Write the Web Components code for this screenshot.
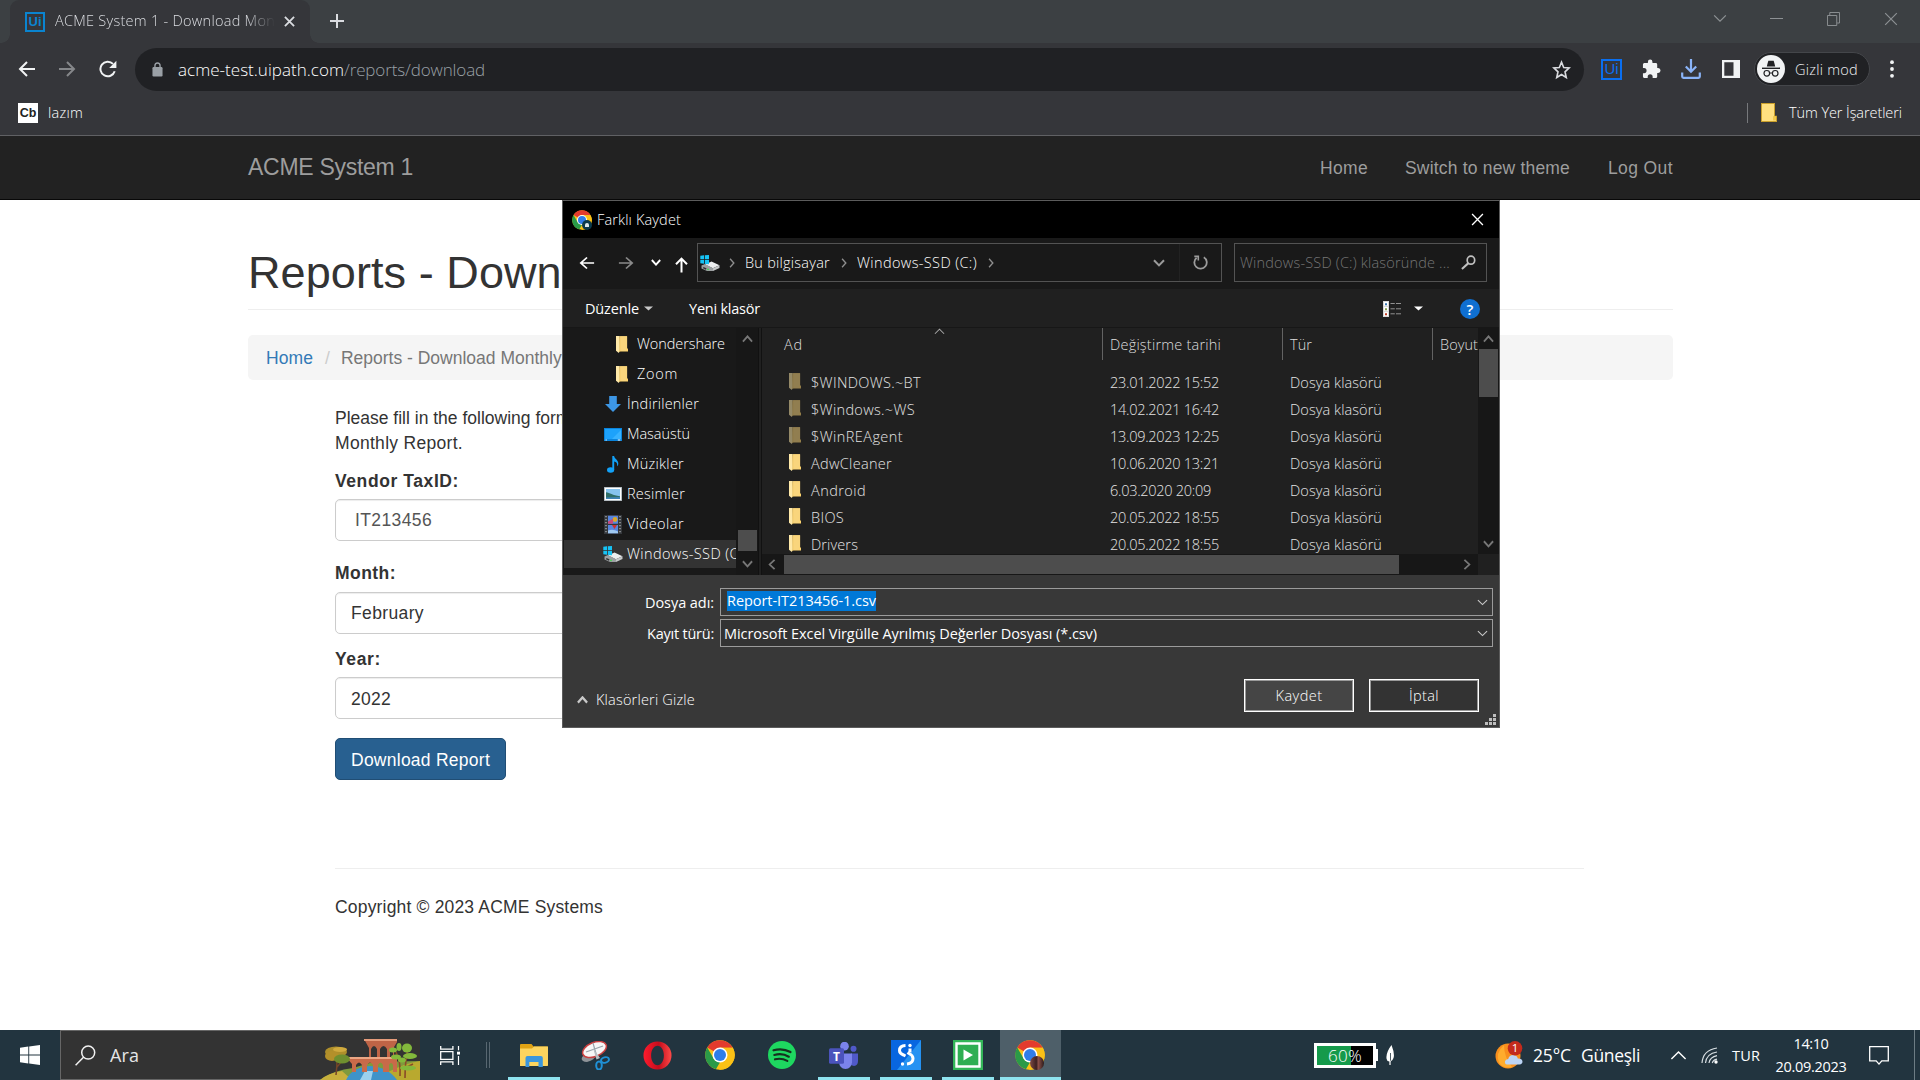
<!DOCTYPE html>
<html lang="tr">
<head>
<meta charset="utf-8">
<title>ACME System 1 - Download Monthly Report</title>
<style>
html,body{margin:0;padding:0;background:#fff}
body{width:1920px;height:1080px;overflow:hidden;position:relative;display:flex;flex-direction:column;font-family:"Open Sans","Noto Sans",sans-serif}
save-dialog{position:absolute;left:562px;top:200px}
</style>
</head>
<body>
<tab-strip></tab-strip>
<nav-toolbar></nav-toolbar>
<bookmark-bar></bookmark-bar>
<acme-navbar></acme-navbar>
<acme-page></acme-page>
<task-bar></task-bar>
<save-dialog></save-dialog>
<script>
const ICONS = {
chrome:`<svg viewBox="0 0 48 48"><circle cx="24" cy="24" r="23.500" fill="#fbc116"/><path d="M24 .5a23.500 23.500 0 0 1 20.500 12H24L14 18 3.600 12A23.500 23.500 0 0 1 24 .5z" fill="#e33b2e"/><path d="M3.600 12 14 30l10 5.500-6.500 11.200L22.600 47.500A23.500 23.500 0 0 1 3.600 12z" fill="#2a9a48"/><path d="M44.500 12.500A23.500 23.500 0 0 1 22.600 47.500L34 29.700 34 18.300 24 12.500z" fill="#fbc116"/><circle cx="24" cy="24" r="12" fill="#fff"/><circle cx="24" cy="24" r="9.600" fill="#2f7de9"/></svg>`,
x:`<svg viewBox="0 0 12 12"><path d="M1 1 11 11M11 1 1 11" stroke="currentColor" stroke-width="var(--sw,1.2)" fill="none"/></svg>`,
down:`<svg viewBox="0 0 12 8"><path d="M1 1.2 6 6.4 11 1.2" stroke="currentColor" stroke-width="var(--sw,1.6)" fill="none"/></svg>`,
up:`<svg viewBox="0 0 12 8"><path d="M1 6.6 6 1.4 11 6.6" stroke="currentColor" stroke-width="var(--sw,1.6)" fill="none"/></svg>`,
right:`<svg viewBox="0 0 8 12"><path d="M1.4 1 6.4 6 1.4 11" stroke="currentColor" stroke-width="var(--sw,1.8)" fill="none"/></svg>`,
left:`<svg viewBox="0 0 8 12"><path d="M6.6 1 1.6 6 6.6 11" stroke="currentColor" stroke-width="var(--sw,1.8)" fill="none"/></svg>`,
tri:`<svg viewBox="0 0 10 6"><path d="M0 .5h10L5 5.5z" fill="currentColor"/></svg>`,
plus:`<svg viewBox="0 0 16 16"><path d="M8 1v14M1 8h14" stroke="currentColor" stroke-width="2"/></svg>`,
back:`<svg viewBox="0 0 18 18"><path d="M17 9H2.5M9 2 2 9l7 7" stroke="currentColor" stroke-width="2" fill="none"/></svg>`,
fwd:`<svg viewBox="0 0 18 18"><path d="M1 9h14.5M9 2l7 7-7 7" stroke="currentColor" stroke-width="2" fill="none"/></svg>`,
arrowup:`<svg viewBox="0 0 13 16"><path d="M6.5 15.500V2M1 7.300 6.500 1.600 12 7.300" stroke="currentColor" stroke-width="2" fill="none"/></svg>`,
reload:`<svg viewBox="0 0 18 18"><path d="M15.700 11.200A7.300 7.300 0 1 1 14 3.900" stroke="currentColor" stroke-width="2" fill="none"/><path d="M17.400.8v7.200h-7.200z" fill="currentColor"/></svg>`,
refresh:`<svg viewBox="0 0 15 15"><path d="M10.800 2.200A6.200 6.200 0 1 1 3.600 2.700" stroke="currentColor" stroke-width="1.800" fill="none"/><path d="M1.300 1.400h4v4.200" stroke="currentColor" stroke-width="1.600" fill="none"/></svg>`,
lock:`<svg viewBox="0 0 12 15"><rect x=".5" y="5" width="11" height="9.500" rx="1.200" fill="currentColor"/><path d="M3.200 6V3.800a2.800 2.800 0 0 1 5.600 0V6" stroke="currentColor" stroke-width="1.500" fill="none"/></svg>`,
star:`<svg viewBox="0 0 20 20"><path d="M10 2.200l2.300 5.300 5.700.5-4.300 3.800 1.300 5.700-5-3-5 3 1.300-5.700L2 8l5.700-.5z" stroke="currentColor" stroke-width="1.700" fill="none"/></svg>`,
puzzle:`<svg viewBox="0 0 20 20"><path d="M17 9h-1V5.500C16 4.600 15.400 4 14.500 4H11V3a2.400 2.400 0 0 0-4.800 0v1H2.700C1.800 4 1 4.700 1 5.600V9h1.200a2.600 2.600 0 0 1 0 5.200H1v3.300c0 .9.700 1.500 1.700 1.500H6v-1.200a2.600 2.600 0 0 1 5.200 0V19h3.300c.9 0 1.500-.6 1.500-1.500V14h1a2.500 2.500 0 0 0 0-5z" fill="currentColor"/></svg>`,
download:`<svg viewBox="0 0 20 20"><path d="M10 0v12M4.800 7.500 10 12.700l5.200-5.200" stroke="currentColor" stroke-width="2.200" fill="none"/><path d="M1.200 13.500v4c0 .8.500 1.300 1.300 1.300h15c.8 0 1.300-.5 1.300-1.300v-4" stroke="currentColor" stroke-width="2.200" fill="none"/></svg>`,
panel:`<svg viewBox="0 0 18 18"><path d="M0 0h18v18H0z M2.300 2.300v13.400h9.200V2.300z" fill-rule="evenodd" fill="currentColor"/></svg>`,
incognito:`<svg viewBox="0 0 28 28"><circle cx="14" cy="14" r="14" fill="#f1f3f4"/><path d="M9.800 11.500l1.500-5.700h5.400l1.500 5.700z" fill="#202124"/><path d="M5 13.300h18" stroke="#202124" stroke-width="1.400"/><circle cx="9.800" cy="18.300" r="2.800" fill="none" stroke="#202124" stroke-width="1.200"/><circle cx="18.200" cy="18.300" r="2.800" fill="none" stroke="#202124" stroke-width="1.200"/><path d="M12.500 18h3" stroke="#202124"/></svg>`,
dots:`<svg viewBox="0 0 4 18"><circle cx="2" cy="2.200" r="1.900" fill="currentColor"/><circle cx="2" cy="9" r="1.900" fill="currentColor"/><circle cx="2" cy="15.800" r="1.900" fill="currentColor"/></svg>`,
max:`<svg viewBox="0 0 14 14"><path d="M.5 3.500h10v10H.5zM3 3V.5h10.500V11H11" stroke="currentColor" fill="none"/></svg>`,
min:`<svg viewBox="0 0 13 3"><path d="M0 1.500h13" stroke="currentColor"/></svg>`,
bmfolder:`<svg viewBox="0 0 16 18"><path d="M.5.5h13v12h2v5H.5z" fill="#ffe080" stroke="#caa02c"/><path d="M12 12.500h3v4h-3z" fill="#f2c94a"/></svg>`,
folder:`<svg viewBox="0 0 13 17"><path d="M4 .3h8v12.200h1v3H3z" fill="#ffd56f"/><path d="M4.500.3H12v12h-1V15H4.500z" fill="#f9d57c"/><path d="M0 0h4l.3 14-1.200 3L0 14.700z" fill="#ffe9a8"/><path d="M4 1v15" stroke="#dfb551" stroke-width=".6"/></svg>`,
drive:`<svg viewBox="0 0 20 16"><path d="M5 9.500 11.500 6.500l8 3.700-6.700 3z" fill="#eceeef"/><path d="M1.500 10.500 5 9l8 4.200V16H7l-5.500-2.600z" fill="#9b9fa1"/><path d="m13 13.200 6.500-3V13L13 16z" fill="#c5c8c9"/><path d="M3.200 12.700l3 1.300" stroke="#333" stroke-width="1.400"/><circle cx="8" cy="14.400" r=".8" fill="#3d4"/><path d="M.3.800 4 .3v3.900H.3zM4.800.2 9 0v4.200H4.800zM.3 5H4v3.800L.3 8.300zM4.800 5H9v4.200l-4.200-.3z" fill="#16c3f5"/></svg>`,
dl:`<svg viewBox="0 0 16 16"><path d="M4.200 0h7.600v8H16l-8 8-8-8h4.200z" fill="#3d97e6"/></svg>`,
desk:`<svg viewBox="0 0 18 13"><path d="M0 0h18v13H0z" fill="#0a84dc"/><path d="M1 1h16v10H1z" fill="#1da2fb"/><path d="M8 11 17 2v9z" fill="#38b2ff"/><path d="M1.500 12h1.300m11 0h2.500" stroke="#fff"/></svg>`,
music:`<svg viewBox="0 0 12 17"><ellipse cx="3.600" cy="14" rx="3.600" ry="2.800" fill="#12a1f7"/><path d="M5.300 0h1.800c.3 3 4.600 3.900 4.200 8.200-.2 1-.8 1.700-1.300 2.100 .7-3-.8-4.400-2.800-4.700V14H5.300z" fill="#12a1f7"/></svg>`,
pics:`<svg viewBox="0 0 18 14"><path d="M0 0h18v14H0z" fill="#a7b0b6"/><path d="M.8.8h16.400v12.400H.800z" fill="#fff"/><path d="M2 2h14v10H2z" fill="#86c3ee"/><path d="M2 5.300c4 .4 6 3 14 4V12H2z" fill="#2f6e68"/><path d="M2 10.500l14-.6V12H2z" fill="#3f83b5"/></svg>`,
video:`<svg viewBox="0 0 18 19"><path d="M0 0h18v19H0z" fill="#34373b"/><path d="M4 .8h10v8H4zM4 10h10v8.300H4z" fill="#5785df"/><circle cx="11" cy="4.500" r="2.400" fill="#d9a72b"/><path d="M4 6.500 9 3.800v5H4z" fill="#c9487b"/><path d="M8 10h5l-2.500 4z" fill="#cf3030"/><path d="M4 15.500q5-2 10 1v1.800H4z" fill="#9fc8f0"/><path d="M2 1v17.500M16 1v17.500" stroke="#8b8f93" stroke-width="1.800" stroke-dasharray="1.300 1.700"/></svg>`,
search:`<svg viewBox="0 0 16 15"><circle cx="10.600" cy="5.200" r="4" stroke="currentColor" stroke-width="1.800" fill="none"/><path d="M7.600 8.300 1 14" stroke="currentColor" stroke-width="2.200"/></svg>`,
view:`<svg viewBox="0 0 18 16"><path d="M0 0h6v16H0z" fill="#d9d9d9"/><path d="M1 1h4v3.700H1zM1 6h4v3.800H1zM1 11.200h4V15H1z" fill="#fff"/><path d="M2 2.200h2v2H2z" fill="#3b79b3"/><path d="M2 7.200h2v2H2z" fill="#87a04e"/><path d="M2 12.200h2v2H2z" fill="#c23b22"/><path d="M7.500 2.500h4.300m1.200 0h5M7.500 7.800h4.300m1.200 0h5M7.500 12.800h4.300m1.200 0h5" stroke="#929292"/></svg>`,
grip:`<svg viewBox="0 0 11 11"><path d="M8 0h3v3H8zM4 4h3v3H4zM8 4h3v3H8zM0 8h3v3H0zM4 8h3v3H4zM8 8h3v3H8z" fill="#bdbdbd"/></svg>`,
win:`<svg viewBox="0 0 20 20"><path d="M0 2.800 8.300 1.600v7.900H0zM9.200 1.500 20 0v9.500H9.200zM0 10.400h8.300v8L0 17.200zM9.200 10.400H20V20L9.200 18.500z" fill="#fff"/></svg>`,
mag:`<svg viewBox="0 0 21 21"><circle cx="13.200" cy="7.600" r="6.500" stroke="#f2f2f2" stroke-width="1.500" fill="none"/><path d="M8.500 12.300.6 20.200" stroke="#f2f2f2" stroke-width="1.500"/></svg>`,
art:`<svg viewBox="0 0 100 50"><path d="M0 50Q14 40 33 38l20-6 47-1v19z" fill="#7f9a3c"/><path d="M68 42q18-9 32-11v19H62z" fill="#b9a92f"/><path d="M0 50q8-7 22-9l10 9z" fill="#c7b03c"/><path d="M26 50q6-13 24-14 18 1 27 14z" fill="#3e93c9"/><path d="M40 50l5-9h8l-2 9z" fill="#9bd1ee"/><path d="M44 9h33v3l-3 5v11H49V18z" fill="#bf6446"/><path d="M44 9h33v2H44z" fill="#e59b7a"/><path d="M51 28v-9q3-6 6 0v9zM60 28v-9q3.500-6 7 0v9zM70 28v-8q2-4 3 0v8z" fill="#333"/><path d="M26 27h51v15h-4v-7q-2-4-4 0v7h-6v-7q-2.500-5-5 0v7h-5v-7q-3-5-6 0v7h-5v-7q-3-5-6 0v7h-4v-8z" fill="#c86a49"/><path d="M26 27h51v2H26z" fill="#eba684"/><path d="M16 45q1-8 1-15M17 37l5-6" stroke="#744527" stroke-width="1.500" fill="none"/><ellipse cx="16" cy="22" rx="11" ry="5.500" fill="#ae8f2b"/><ellipse cx="12" cy="26" rx="7" ry="5" fill="#b3902a"/><ellipse cx="22" cy="29" rx="8" ry="4.500" fill="#6f8f2f"/><ellipse cx="20" cy="19.500" rx="7" ry="2.500" fill="#d0aa3e"/><path d="M80 46q1-14-4-24M85 48q0-16 3-30M85 38l8-4" stroke="#8a4b28" stroke-width="1.600" fill="none"/><g fill="#83b83b"><ellipse cx="73" cy="20" rx="4" ry="2.500"/><ellipse cx="79" cy="17" rx="2.500" ry="4"/><ellipse cx="76" cy="27" rx="5" ry="2.500"/><ellipse cx="87" cy="18" rx="5" ry="4.500"/><ellipse cx="90" cy="26" rx="7" ry="3"/><ellipse cx="82" cy="30" rx="4" ry="2.500"/><ellipse cx="88" cy="38" rx="8" ry="2.500"/></g></svg>`,
task:`<svg viewBox="0 0 20 20"><path d="M.7 0v3.300h12.200V0M.7 20v-3.300h12.200V20M.7 6h12.200v8H.7z" stroke="#fff" stroke-width="1.300" fill="none"/><path d="M18.500 0v4.500M18.500 10.500V20" stroke="#fff" stroke-width="1.200"/><path d="M17 6h3v3h-3z" fill="#fff"/></svg>`,
explorer:`<svg viewBox="0 0 28 23"><path d="M0 1q0-1 1-1h10.500l2 2.500H27q1 0 1 1V21q0 1-1 1H0z" fill="#dfa214"/><path d="M0 4.500h12L14 2.500h14V21q0 1-1 1H0z" fill="#fcd45e"/><path d="M5.500 23V14q0-2 2-2h13.300q2 0 2 2v9h-4.300v-5H9.300v5z" fill="#3a96dd"/></svg>`,
snip:`<svg viewBox="0 0 29 29"><path d="M2 15q-4 5 4 6 8-2 9-7l-2-3z" fill="#8f9499"/><ellipse cx="13.500" cy="8.500" rx="12.500" ry="7" transform="rotate(-22 13.500 8.500)" fill="#f7f7f7" stroke="#c94141" stroke-width="1.500"/><path d="M12 2l4.500 16M5 11l17-6" stroke="#9aa3aa" stroke-width="1.200"/><path d="M15.500 18.500 12 7l7 10" fill="#b9bfc4"/><ellipse cx="24" cy="19" rx="4" ry="2.700" transform="rotate(-15 24 19)" fill="none" stroke="#1f90d6" stroke-width="2"/><ellipse cx="18" cy="24.500" rx="2.800" ry="4" fill="none" stroke="#1f90d6" stroke-width="2"/></svg>`,
opera:`<svg viewBox="0 0 30 30"><defs><linearGradient id="g" x1="0" x2="1"><stop offset="0" stop-color="#ff1b2d"/><stop offset=".55" stop-color="#c40d1c"/><stop offset="1" stop-color="#ff4a48"/></linearGradient></defs><path d="M15 .5a14.500 14.500 0 1 0 0 29 14.500 14.500 0 1 0 0-29zm0 4.500c4 0 6.600 4.600 6.600 10S19 25 15 25s-6.600-4.600-6.600-10S11 5 15 5z" fill="url(#g)" fill-rule="evenodd"/></svg>`,
spotify:`<svg viewBox="0 0 28 28"><circle cx="14" cy="14" r="14" fill="#1ed760"/><path d="M5.500 9.300q9-2.600 17 1.700M6.300 14q8-2.200 14.500 1.700M7 18.300q6.500-1.600 12.300 1.600" stroke="#16301f" stroke-width="2.200" stroke-linecap="round" fill="none"/></svg>`,
teams:`<svg viewBox="0 0 29 26"><circle cx="24.500" cy="6.500" r="3" fill="#5059c9"/><circle cx="15.500" cy="4" r="4.300" fill="#7b83eb"/><path d="M22 11h7v7q0 4.500-4 5-3 0-4-2z" fill="#5059c9"/><path d="M10 11h13v8.500q-.5 6-6.500 6.500-6-.5-6.500-6.500z" fill="#7b83eb"/><rect y="6" width="15" height="15" rx="1.500" fill="#4b53bc"/><text x="7.500" y="18" font-family="Open Sans" font-weight="700" font-size="12" fill="#fff" text-anchor="middle">T</text></svg>`,
sbox:`<svg viewBox="0 0 30 30"><path d="M0 0h30v30H0z" fill="#0866e0"/><path d="M30 0v30H6z" fill="#2592f2"/><path d="M14.500 5.500q-6 .2-6 5 0 3 4 4.500l2 1M16.500 12.500l1.500 1q4 1.800 4 5 0 5-6 5.500" stroke="#fff" stroke-width="3" fill="none"/><circle cx="19" cy="5.500" r="1.700" fill="#fff"/><path d="M17.500 8.500h3v4h-3z" fill="#fff"/><circle cx="11.500" cy="24" r="1.700" fill="#fff"/></svg>`,
play:`<svg viewBox="0 0 30 30"><path d="M0 0h30v30H0z" fill="#33b558"/><path d="M3.500 3.500h23v23h-23z" stroke="#fff" stroke-width="2.400" fill="#2fae52"/><path d="M10.500 9.500v11l9.500-5.500z" fill="#fff"/></svg>`,
leaf:`<svg viewBox="0 0 8 20"><path d="M5.500 0Q9 9 7.500 13q-1 3-3 3.500Q1 17 .6 14-.5 8 5.500 0z" fill="#fff"/><path d="M4.500 8v8" stroke="#22343f" stroke-width=".8"/><path d="M4 15.500V20" stroke="#fff" stroke-width="1.200"/></svg>`,
weather:`<svg viewBox="0 0 28 28"><circle cx="13" cy="15" r="12.500" fill="#f88f1d"/><path d="M4 22q-4-10 5-18 0 12 8 22-8 2-13-4z" fill="#ffac2d"/><path d="M12 23.500q-2.500-.5-2-3.300.5-2 3.200-2.200 1-4 5-4 3.800.2 4.600 3.600 4.400-.2 4.700 2.900 0 2.700-3 3z" fill="#bcd4f5"/><circle cx="20" cy="7.300" r="7.300" fill="#c42b1c"/><text x="20" y="11.300" font-family="Open Sans" font-size="11.500" fill="#fff" text-anchor="middle">1</text></svg>`,
wifi:`<svg viewBox="0 0 17 17"><path d="M1 16Q2 3 16 1M4.500 16Q5.500 6.500 16 5M8 16Q9 10 16 8.700M11.300 16q.7-3 4.700-3.800" stroke="#d8dfe3" stroke-width="1.200" fill="none"/><circle cx="15" cy="15" r="1.700" fill="#fff"/></svg>`,
notif:`<svg viewBox="0 0 20 20"><path d="M.7.700h18.600v15h-6.500L10 19l-2.800-3.300H.7z" stroke="#fff" stroke-width="1.300" fill="none"/></svg>`
};
class Base extends HTMLElement{
  connectedCallback(){
    if(this.shadowRoot) return;
    this.attachShadow({mode:'open'}).innerHTML=
      `<style>*{box-sizing:border-box}:host{box-sizing:border-box}.r{display:flex;align-items:center}.sp{flex:1}${this.css||''}</style>${this.render()}`;
    this.ready&&this.ready();
  }
}
const def=(n,css,render,ready)=>customElements.define(n,class extends Base{
  get css(){return css} render(){return render(this)} ready(){ready&&ready(this)}});

/* <ui-icon n w h>: inline SVG drawing from the ICONS table */
def('ui-icon',`:host{display:block;flex:none}svg{display:block;width:100%;height:100%}`,
 e=>ICONS[e.getAttribute('n')].replace('<svg ','<svg preserveAspectRatio="none" '),
 e=>{e.style.width=e.getAttribute('w')+'px';e.style.height=e.getAttribute('h')+'px'});
/* <fit-text w>: one line of text tracked to an exact width */
def('fit-text',`:host{display:block;flex:none;white-space:pre}`,()=>`<span><slot></slot></span>`,
 e=>{const w=+e.getAttribute('w');if(!w)return;
  const nat=e.shadowRoot.querySelector('span').getBoundingClientRect().width;
  e.style.letterSpacing=((w-nat)/e.textContent.length)+'px';e.style.width=w+'px'});
def('ui-badge',`:host{display:flex;flex:none;align-items:center;justify-content:center;border:2px solid var(--c);color:var(--c);font:700 13px/16px "Liberation Sans",sans-serif;width:20px;height:20px}`,()=>`<slot></slot>`);

def('tab-strip',`:host{display:flex;height:43px;background:#3c4043;color:#dadce0;padding-left:10px;flex:none}
 .tab{width:300px;height:43px;background:#35363a;border-radius:9px 9px 0 0;padding-left:15px;position:relative}
 .tab:before,.tab:after{content:"";position:absolute;bottom:0;width:9px;height:9px}
 .tab:before{left:-9px;background:radial-gradient(circle at 0 0,transparent 8.500px,#35363a 9px)}
 .tab:after{right:-9px;background:radial-gradient(circle at 100% 0,transparent 8.500px,#35363a 9px)}
 .t{margin:-2px 0 0 10px;width:220px;overflow:hidden;font-size:14.500px;font-weight:350;-webkit-mask:linear-gradient(90deg,#000 190px,transparent 220px)}
 .wc{color:#8d9194}`,
 ()=>`<div class="tab r"><ui-badge style="--c:#0a84cf">Ui</ui-badge><div class="t"><fit-text w="220">ACME System 1 - Download Mon</fit-text></div><ui-icon n="x" w="11" h="11" style="margin-left:9px;--sw:2"></ui-icon></div>
 <div class="r" style="margin-left:19px"><ui-icon n="plus" w="16" h="16" style="margin-top:-1px"></ui-icon></div><div class="sp"></div>
 <div class="r wc" style="padding:0 22px 6px 0"><ui-icon n="down" w="14" h="9" style="--sw:1"></ui-icon><ui-icon n="min" w="13" h="3" style="margin-left:43px"></ui-icon><ui-icon n="max" w="13" h="14" style="margin-left:44px"></ui-icon><ui-icon n="x" w="14" h="14" style="margin-left:44px;--sw:1"></ui-icon></div>`);

def('nav-toolbar',`:host{display:flex;align-items:center;height:53px;background:#35363a;padding:0 0 1px 18px;color:#f1f3f4;flex:none}
 .omni{width:1449px;height:43px;border-radius:22px;background:#202124;margin:1px 0 0 18px;padding:0 13px 0 17px;font-size:17px;font-weight:350}
 .pill{width:116px;height:34px;border-radius:17px;border:1px solid #44464a;background:#202124;padding-left:2px;margin-left:14px;font-size:14.500px;font-weight:350}`,
 ()=>`<ui-icon n="back" w="18" h="18"></ui-icon><ui-icon n="fwd" w="18" h="18" style="margin-left:22px;color:#85878a"></ui-icon><ui-icon n="reload" w="18" h="18" style="margin-left:23px"></ui-icon>
 <div class="omni r"><ui-icon n="lock" w="11" h="15" style="color:#9aa0a6"></ui-icon><fit-text w="166" style="margin-left:15px;color:#fff">acme-test.uipath.com</fit-text><fit-text w="141" style="color:#9aa0a6">/reports/download</fit-text><div class="sp"></div><ui-icon n="star" w="19" h="20" style="color:#dadce0"></ui-icon></div>
 <ui-badge style="--c:#0a6ff0;margin-left:17px;width:21px;height:21px;font-weight:400;font-size:15px">Ui</ui-badge>
 <ui-icon n="puzzle" w="19" h="20" style="margin-left:20px"></ui-icon><ui-icon n="download" w="20" h="20" style="margin-left:20px;color:#8ab4f8"></ui-icon><ui-icon n="panel" w="18" h="18" style="margin-left:21px"></ui-icon>
 <div class="pill r"><ui-icon n="incognito" w="28" h="28"></ui-icon><fit-text w="63" style="margin-left:10px">Gizli mod</fit-text></div><ui-icon n="dots" w="4" h="18" style="margin-left:20px"></ui-icon>`);

def('bookmark-bar',`:host{display:flex;height:40px;background:#35363a;border-bottom:1px solid #606164;align-items:center;padding:0 18px 6px;color:#fff;font-size:14.500px;font-weight:350;flex:none}
 .cb{width:20px;height:20px;background:#fff;color:#222;font:700 12.500px/20px "Liberation Sans",sans-serif;text-align:center}`,
 ()=>`<div class="cb">Cb</div><fit-text w="35" style="margin-left:10px">lazım</fit-text><div class="sp"></div><div style="width:1px;height:20px;background:#77797c;margin-right:13px"></div><ui-icon n="bmfolder" w="16" h="19"></ui-icon><fit-text w="113" style="margin-left:12px">Tüm Yer İşaretleri</fit-text>`);

def('acme-navbar',`:host{display:flex;height:64px;background:#222;border-bottom:1px solid #080808;align-items:center;padding:1px 247px 0 248px;color:#9d9d9d;font:17.500px/25px "Liberation Sans",Arial,sans-serif;flex:none}`,
 ()=>`<fit-text w="165" style="font-size:23px;margin-top:-2px">ACME System 1</fit-text><div class="sp"></div><fit-text w="48">Home</fit-text><fit-text w="165" style="margin-left:37px">Switch to new theme</fit-text><fit-text w="65" style="margin-left:38px">Log Out</fit-text>`);

def('form-field',`:host{display:block}label{display:block;font-weight:700;height:25px}
 .in{margin-top:var(--gap,7px);height:42px;width:560px;border:1px solid #ccc;border-radius:5px;box-shadow:inset 0 1px 1px rgba(0,0,0,.075);line-height:40px;padding-left:15px}`,
 ()=>`<label><slot name="label"></slot></label><div class="in"><slot></slot></div>`);

def('acme-page',`:host{display:block;height:830px;padding:48px 247px 0 248px;color:#333;font:17.500px/25px "Liberation Sans",Arial,sans-serif;overflow:hidden;flex:none}
 h1{font-weight:400;font-size:45px;line-height:50px;margin:0;padding-bottom:11px;height:62px;border-bottom:1px solid #eee;letter-spacing:.08px}
 .bc{margin-top:25px;height:45px;background:#f5f5f5;border-radius:5px;padding:2px 0 0 18px;display:flex;align-items:center;color:#777;white-space:pre}
 .m{padding-left:87px;padding-right:89px}
 .btn{display:flex;align-items:center;width:171px;height:42px;margin-top:18px;background:#286090;border:1px solid #204d74;border-radius:5px;color:#fff;padding:2px 0 0 15px}
 .hr{height:1px;background:#eee;margin-top:88px}`,
 ()=>`<h1>Reports - Download Monthly Report</h1>
 <div class="bc"><fit-text w="47" style="color:#337ab7">Home</fit-text><span style="color:#ccc;margin:0 11px 0 12px">/</span>Reports - Download Monthly Report</div>
 <div class="m"><div style="margin-top:26px;white-space:pre">Please fill in the following form to download your</div><fit-text w="128">Monthly Report.</fit-text>
 <form-field style="margin-top:13px;--gap:5px"><fit-text w="124" slot="label">Vendor TaxID:</fit-text><fit-text w="77" style="color:#555;padding-left:4px">IT213456</fit-text></form-field>
 <form-field style="margin-top:20px;--gap:6px"><fit-text w="61" slot="label">Month:</fit-text><fit-text w="73">February</fit-text></form-field>
 <form-field style="margin-top:13px;--gap:5px"><fit-text w="46" slot="label">Year:</fit-text><fit-text w="40" style="padding-top:1px;margin-bottom:-1px">2022</fit-text></form-field>
 <div class="btn" style="margin-top:19px"><fit-text w="139">Download Report</fit-text></div><div class="hr"></div><fit-text w="268" style="margin-top:26px">Copyright © 2023 ACME Systems</fit-text></div>`);

def('tree-item',`:host{display:flex;height:30px;align-items:center;margin-left:1px;padding-left:var(--in,40px)}
 :host([sel]){background:#333;height:28px;margin-top:1px} .i{width:20px;display:flex;justify-content:center;margin-right:4px;flex:none}`,
 e=>`<div class="i"><slot name="icon"></slot></div><slot></slot>`);
def('file-row',`:host{display:flex;height:27px;align-items:center;padding-left:27px}
 .n{width:299px;margin-left:9px}.d{width:180px}:host([dim]) ui-icon{opacity:.52}`,
 e=>`<ui-icon n="folder" w="12" h="17" style="margin-top:-2px;margin-right:1px"></ui-icon><div class="n"><fit-text w="${e.getAttribute('w')}">${e.getAttribute('name')}</fit-text></div><div class="d"><fit-text w="${e.getAttribute('dw')||109}">${e.getAttribute('date')}</fit-text></div><fit-text w="92">Dosya klasörü</fit-text>`);
def('combo-row',`:host{display:flex;height:28px;align-items:center}
 .l{width:151px;display:flex;justify-content:flex-end;margin-right:6px;padding-top:2px}
 .b{width:773px;height:28px;border:1px solid #9b9b9b;padding:0 4px 0 var(--p,3px);background:var(--bg,#383838)}`,
 ()=>`<div class="l"><slot name="label"></slot></div><div class="b r"><slot></slot><div class="sp"></div><ui-icon n="down" w="11" h="7" style="color:#c8c8c8;--sw:1.2"></ui-icon></div>`);
def('dialog-button',`:host{display:flex;width:110px;height:33px;align-items:center;justify-content:center;border:1px solid #fff;box-shadow:inset 0 0 0 1px #999;background:var(--bg,#333);color:#fff;padding-top:1px}`,()=>`<slot></slot>`);

const tree=[['folder',12,17,'Wondershare',88,1],['folder',12,17,'Zoom',41,1],['dl',16,16,'İndirilenler',72],['desk',18,13,'Masaüstü',63],['music',12,17,'Müzikler',57],['pics',18,14,'Resimler',58],['video',18,19,'Videolar',57],['drive',20,16,'Windows-SSD (C:)',120]];
const files=[['$WINDOWS.~BT',110,'23.01.2022 15:52',1],['$Windows.~WS',104,'14.02.2021 16:42',1],['$WinREAgent',92,'13.09.2023 12:25',1],['AdwCleaner',81,'10.06.2020 13:21'],['Android',55,'6.03.2020 20:09'],['BIOS',33,'20.05.2022 18:55'],['Drivers',47,'20.05.2022 18:55']];
def('save-dialog',`:host{display:flex;flex-direction:column;width:938px;height:528px;border:1px solid #5c5c5c;background:#383838;color:#fff;font-size:14.500px;font-weight:350;line-height:20px}
 .tt{height:37px;background:#000;padding:0 15px 0 9px}
 .nav{height:51px;background:#191919;padding-left:16px;align-items:flex-start}
 .nav>*{margin-top:18px}
 .ad,.se{height:39px;border:1px solid #535353;margin-top:5px}
 .ad{width:525px;margin-left:9px;padding-left:2px}.se{width:253px;margin-left:12px;color:#757575;padding:0 10px 0 5px}
 .cmd{height:39px;background:#202020;border-bottom:1px solid #171717;padding:1px 19px 0 22px;font-weight:400}
 .panes{display:flex;height:247px}
 .tree{width:174px;background:#191919;overflow:hidden;padding-top:1px}
 .sb{background:#171717;display:flex;flex-direction:column;align-items:center;color:#777}
 .th{background:#4d4d4d}
 .list{flex:1;background:#202020;height:226px;overflow:hidden;color:#e4e4e4}
 .hd{display:flex;height:32px;align-items:center;padding-left:22px;color:#dedede}
 .hd fit-text{margin-top:2px}
 .hd i{width:1px;height:32px;background:#636363;margin-right:7px}
 .foot{flex:1;padding-top:13px;position:relative}`,
 ()=>`<div class="tt r"><div style="position:relative"><ui-icon n="chrome" w="20" h="20"></ui-icon><div style="position:absolute;right:0;bottom:0;width:10px;height:10px;border-radius:5px;background:#0b3a4b;padding:3px"><div style="width:4px;height:4px;background:#dce8ec;border-radius:2px 2px 0 0"></div></div></div><fit-text w="84" style="margin-left:5px">Farklı Kaydet</fit-text><div class="sp"></div><ui-icon n="x" w="13" h="13"></ui-icon></div>
 <div class="nav r"><ui-icon n="back" w="16" h="14"></ui-icon><ui-icon n="fwd" w="16" h="14" style="margin-left:23px;color:#8a8a8a"></ui-icon><ui-icon n="down" w="10" h="7" style="margin:21px 0 0 17px;--sw:2.300"></ui-icon><ui-icon n="arrowup" w="13" h="16" style="margin-left:14px;margin-top:19px"></ui-icon>
 <div class="ad r"><ui-icon n="drive" w="20" h="16"></ui-icon><ui-icon n="right" w="6" h="10" style="margin-left:9px;color:#8f8f8f"></ui-icon><fit-text w="85" style="margin-left:10px">Bu bilgisayar</fit-text><ui-icon n="right" w="6" h="10" style="margin-left:11px;color:#8f8f8f"></ui-icon><fit-text w="120" style="margin-left:10px">Windows-SSD (C:)</fit-text><ui-icon n="right" w="6" h="10" style="margin-left:11px;color:#8f8f8f"></ui-icon><div class="sp"></div><ui-icon n="down" w="12" h="8" style="color:#9b9b9b;--sw:2"></ui-icon><div style="width:1px;height:37px;background:#222;margin:0 13px 0 14px"></div><ui-icon n="refresh" w="15" h="15" style="color:#9b9b9b;margin-right:13px"></ui-icon></div>
 <div class="se r"><fit-text w="210">Windows-SSD (C:) klasöründe ...</fit-text><div class="sp"></div><ui-icon n="search" w="15" h="15" style="color:#c0c0c0"></ui-icon></div></div>
 <div class="cmd r"><fit-text w="54">Düzenle</fit-text><ui-icon n="tri" w="9" h="5" style="margin-left:5px;color:#c9c9c9"></ui-icon><fit-text w="71" style="margin-left:36px">Yeni klasör</fit-text><div class="sp"></div><ui-icon n="view" w="18" h="16"></ui-icon><ui-icon n="tri" w="9" h="5" style="margin-left:13px"></ui-icon><div style="margin-left:37px;width:20px;height:20px;border-radius:10px;background:#0f6fd1;font-weight:600;text-align:center;font-size:15px">?</div></div>
 <div class="panes"><div class="tree">${tree.map((t,i)=>`<tree-item ${i==7?'sel':''} style="--in:${t[5]?48:39}px"><ui-icon slot="icon" n="${t[0]}" w="${t[1]}" h="${t[2]}"></ui-icon><fit-text w="${t[4]}"${t[5]?' style="margin-left:1px"':''}>${t[3]}</fit-text></tree-item>`).join('')}</div>
 <div class="sb" style="width:22px;padding-top:7px"><ui-icon n="up" w="11" h="8" style="--sw:2"></ui-icon><div class="th" style="width:19px;height:21px;margin-top:187px"></div><ui-icon n="down" w="11" h="8" style="--sw:2;margin-top:9px"></ui-icon></div><div style="width:4px;background:#202020;border-left:1px solid #111;border-right:1px solid #111"></div>
 <div style="flex:1"><div style="display:flex"><div class="list" style="position:relative"><div class="hd"><fit-text w="19">Ad</fit-text><div style="width:299px"></div><i></i><fit-text w="111">Değiştirme tarihi</fit-text><div style="width:61px"></div><i></i><fit-text w="22">Tür</fit-text><div style="width:120px"></div><i></i><fit-text w="38">Boyut</fit-text></div>
 <ui-icon n="up" w="11" h="7" style="position:absolute;left:172px;top:0;color:#aaa;--sw:1.100"></ui-icon><div style="height:9px"></div>
 ${files.map(f=>`<file-row name="${f[0]}" w="${f[1]}" date="${f[2]}" dw="${f[2][0]=='6'?101:109}" ${f[3]?'dim':''}></file-row>`).join('')}</div>
 <div class="sb" style="width:21px;height:226px;padding-top:7px"><ui-icon n="up" w="11" h="8" style="--sw:2"></ui-icon><div class="th" style="width:19px;height:48px;margin-top:6px"></div><div class="sp"></div><ui-icon n="down" w="11" h="8" style="--sw:2;margin-bottom:6px"></ui-icon></div></div>
 <div class="r" style="height:21px;background:#171717;color:#777"><ui-icon n="left" w="8" h="11" style="margin:0 12px 0 6px"></ui-icon><div class="th" style="width:615px;height:19px;margin-left:-4px"></div><div class="sp"></div><ui-icon n="right" w="8" h="11" style="margin-right:7px"></ui-icon><div style="width:21px;height:21px;background:#202020"></div></div></div></div>
 <div class="foot"><combo-row style="--p:6px"><fit-text w="69" slot="label" style="font-weight:400">Dosya adı:</fit-text><fit-text w="149" style="background:#0078d7;line-height:20px;margin-top:-2px;font-weight:400">Report-IT213456-1.csv</fit-text></combo-row>
 <combo-row style="margin-top:3px;--bg:#333;font-weight:400"><fit-text w="67" slot="label">Kayıt türü:</fit-text><fit-text w="373" style="margin-top:1px">Microsoft Excel Virgülle Ayrılmış Değerler Dosyası (*.csv)</fit-text></combo-row>
 <div class="r" style="height:33px;margin-top:32px;padding:0 20px 0 14px"><ui-icon n="up" w="11" h="8" style="--sw:2.400;margin-top:8px;color:#c9c9c9"></ui-icon><fit-text w="99" style="margin:8px 0 0 8px">Klasörleri Gizle</fit-text><div class="sp"></div><dialog-button style="--bg:#454545"><fit-text w="47">Kaydet</fit-text></dialog-button><dialog-button style="margin-left:15px"><fit-text w="30">İptal</fit-text></dialog-button></div>
 <ui-icon n="grip" w="11" h="11" style="position:absolute;right:3px;bottom:2px"></ui-icon></div>`);

def('task-button',`:host{display:flex;width:62px;height:50px;align-items:center;justify-content:center;position:relative;flex:none}
 :host([run]):after{content:"";position:absolute;bottom:0;left:5px;right:5px;height:3px;background:#8fe3ef}
 :host([active]){background:#4e5f69}:host([active]):after{left:0;right:0}`,()=>`<slot></slot>`);
def('task-bar',`:host{display:flex;height:50px;background:#22343f;color:#fff;align-items:center;flex:none}
 .s{width:360px;height:50px;background:#333;border:1px solid #666;border-right:0;padding-left:14px;font-size:18px}
 .bat{width:62px;height:25px;border:3px solid #fff;background:linear-gradient(90deg,#159a4b 60%,#000 60%);font-size:17px;font-weight:300;line-height:19px;justify-content:center}
 .clk{display:flex;flex-direction:column;align-items:center;font-size:14.500px;line-height:23px;width:72px}`,
 ()=>`<div class="r" style="width:60px;justify-content:center"><ui-icon n="win" w="20" h="20"></ui-icon></div>
 <div class="s r"><ui-icon n="mag" w="21" h="21"></ui-icon><fit-text w="29" style="margin-left:14px;color:#e6e6e6">Ara</fit-text><div class="sp"></div><ui-icon n="art" w="100" h="50"></ui-icon></div>
 <ui-icon n="task" w="20" h="19" style="margin-left:20px"></ui-icon><div style="width:4px;height:26px;border:1px solid #586771;border-width:0 1px;margin-left:26px"></div>
 <div class="r" style="margin-left:13px"><task-button run><ui-icon n="explorer" w="28" h="23"></ui-icon></task-button><task-button><ui-icon n="snip" w="29" h="29" style="margin-right:2px"></ui-icon></task-button><task-button><ui-icon n="opera" w="29" h="29" style="margin-right:1px"></ui-icon></task-button><task-button><ui-icon n="chrome" w="30" h="30"></ui-icon></task-button><task-button><ui-icon n="spotify" w="28" h="28"></ui-icon></task-button><task-button run><ui-icon n="teams" w="29" h="27" style="margin-right:2px"></ui-icon></task-button><task-button run><ui-icon n="sbox" w="30" h="30"></ui-icon></task-button><task-button run><ui-icon n="play" w="30" h="30"></ui-icon></task-button><task-button run active style="width:61px;margin-left:1px"><ui-icon n="chrome" w="30" h="30" style="margin-right:1px"></ui-icon><div style="position:absolute;left:30px;top:26px;width:14px;height:14px;border-radius:7px;background:linear-gradient(90deg,#7c4a46,#3c2020 45%,#8a4f48 60%,#2b1a1a)"></div></task-button></div>
 <div class="sp"></div>
 <div class="r bat"><fit-text w="34">60%</fit-text></div><div style="width:2px;height:12px;background:#fff"></div><ui-icon n="leaf" w="8" h="20" style="margin-left:8px"></ui-icon>
 <ui-icon n="weather" w="28" h="28" style="margin-left:101px"></ui-icon><fit-text w="38" style="font-size:17.500px;margin-left:10px">25°C</fit-text><fit-text w="59" style="font-size:17.500px;margin-left:10px">Güneşli</fit-text>
 <ui-icon n="up" w="17" h="11" style="margin-left:30px;--sw:1"></ui-icon><ui-icon n="wifi" w="17" h="17" style="margin-left:14px"></ui-icon><fit-text w="28" style="font-size:14.500px;margin-left:14px">TUR</fit-text>
 <div class="clk" style="margin-left:15px"><fit-text w="35">14:10</fit-text><fit-text w="71">20.09.2023</fit-text></div><ui-icon n="notif" w="20" h="19" style="margin-left:22px"></ui-icon><div style="width:1px;height:50px;background:#6d7c84;margin:0 5px 0 25px"></div>`);
</script>
</body>
</html>
